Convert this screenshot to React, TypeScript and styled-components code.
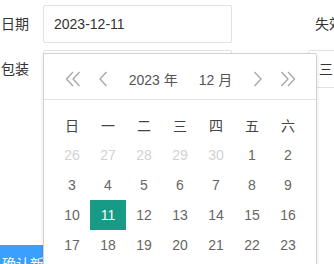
import React from "react";
import styled, { createGlobalStyle } from "styled-components";

const Global = createGlobalStyle`
    html, body {
        margin: 0;
        padding: 0;
        overflow: hidden;
        background: #fff;
    }
    body {
        font-family: "Liberation Sans", "Noto Sans CJK SC", sans-serif;
        font-size: 14px;
        color: #333;
    }
`;

const Page = styled.div`
    width: 334px;
    height: 264px;
    overflow: hidden;
    padding-top: 5px;
    box-sizing: border-box;
`;

const Row = styled.div<{ $gap?: number }>`
    display: flex;
    align-items: center;
    height: 38px;
    margin-bottom: ${({ $gap }) => $gap ?? 7}px;
    white-space: nowrap;
`;

const Label = styled.label<{ $offset?: number }>`
    flex: none;
    width: ${({ $offset }) => ($offset ? "auto" : "42px")};
    margin-left: ${({ $offset }) => $offset ?? 0}px;
    padding-left: ${({ $offset }) => ($offset ? 0 : 1)}px;
    line-height: 38px;
    color: #333;
`;

const Field = styled.div<{ $width: number; $offset?: number }>`
    position: relative;
    flex: none;
    width: ${({ $width }) => $width}px;
    margin-left: ${({ $offset }) => $offset ?? 0}px;
`;

const Input = styled.div`
    height: 38px;
    box-sizing: border-box;
    padding: 0 10px;
    border: 1px solid #e2e2e2;
    border-radius: 2px;
    line-height: 36px;
    color: #333;
    background: #fff;
`;

const Button = styled.button`
    display: block;
    height: 38px;
    margin-top: 157px;
    padding: 0 18px 0 2px;
    border: none;
    background: #3a9ffd;
    color: #fff;
    font-family: inherit;
    font-size: 14px;
    line-height: 38px;
`;

/* date picker popup */
const Picker = styled.div`
    position: absolute;
    left: 0;
    top: 43px;
    margin-top: 5px;
    width: 272px;
    border: 1px solid #d2d2d2;
    border-radius: 2px;
    background: #fff;
    box-shadow: 0 2px 4px rgba(0, 0, 0, .12);
    z-index: 10;
`;

const Header = styled.div`
    display: flex;
    align-items: center;
    justify-content: space-between;
    height: 30px;
    padding: 10px 20px 5px 21px;
    border-bottom: 1px solid #e2e2e2;
`;

const NavGroup = styled.div`
    display: flex;
    align-items: center;
    gap: 17px;
`;

const Title = styled.div`
    display: flex;
    gap: 21px;
    color: #555;
    font-size: 14px;
`;

const Content = styled.div`
    display: grid;
    grid-template-columns: repeat(7, 36px);
    grid-auto-rows: 30px;
    padding: 10px;
`;

const Cell = styled.div<{ $kind: "head" | "other" | "day" | "this" }>`
    display: flex;
    align-items: center;
    justify-content: center;
    font-size: 14px;
    color: ${({ $kind }) =>
        $kind === "head" ? "#444" : $kind === "other" ? "#d2d2d2" : $kind === "this" ? "#fff" : "#666"};
    background: ${({ $kind }) => ($kind === "this" ? "#179a86" : "transparent")};
`;

const Chevron = ({ double, flip }: { double?: boolean; flip?: boolean }) => (
    <svg
        width={double ? 16 : 10}
        height="16"
        viewBox={double ? "0 0 16 16" : "0 0 10 16"}
        fill="none"
        stroke="#a6a6a6"
        strokeWidth="1.3"
        style={flip ? { transform: "scaleX(-1)" } : undefined}
    >
        {double ? (
            <>
                <polyline points="8,1 1.5,8 8,15" />
                <polyline points="14.5,1 8,8 14.5,15" />
            </>
        ) : (
            <polyline points="8.5,1 2,8 8.5,15" />
        )}
    </svg>
);

const weekDays = ["日", "一", "二", "三", "四", "五", "六"];

const days: { n: number; other: boolean }[] = [
    ...[26, 27, 28, 29, 30].map((n) => ({ n, other: true })),
    ...Array.from({ length: 31 }, (_, i) => ({ n: i + 1, other: false })),
    ...[1, 2, 3, 4, 5, 6].map((n) => ({ n, other: true })),
];

const DatePicker = () => (
    <Picker>
        <Header>
            <NavGroup>
                <Chevron double />
                <Chevron />
            </NavGroup>
            <Title>
                <span>2023 年</span>
                <span>12 月</span>
            </Title>
            <NavGroup>
                <Chevron flip />
                <Chevron double flip />
            </NavGroup>
        </Header>
        <Content>
            {weekDays.map((d) => (
                <Cell key={d} $kind="head">{d}</Cell>
            ))}
            {days.map((d, i) => (
                <Cell key={i} $kind={d.other ? "other" : d.n === 11 ? "this" : "day"}>
                    {d.n}
                </Cell>
            ))}
        </Content>
    </Picker>
);

const App = () => {
    return (
        <Page>
            <Global />
            <Row>
                <Label>日期</Label>
                <Field $width={189}>
                    <Input>2023-12-11</Input>
                    <DatePicker />
                </Field>
                <Label $offset={83}>失效日期</Label>
            </Row>
            <Row>
                <Label>包装</Label>
                <Field $width={189}>
                    <Input />
                </Field>
                <Field $width={120} $offset={76}>
                    <Input>三</Input>
                </Field>
            </Row>
            <Button>确认新增</Button>
        </Page>
    );
};

export default App;
